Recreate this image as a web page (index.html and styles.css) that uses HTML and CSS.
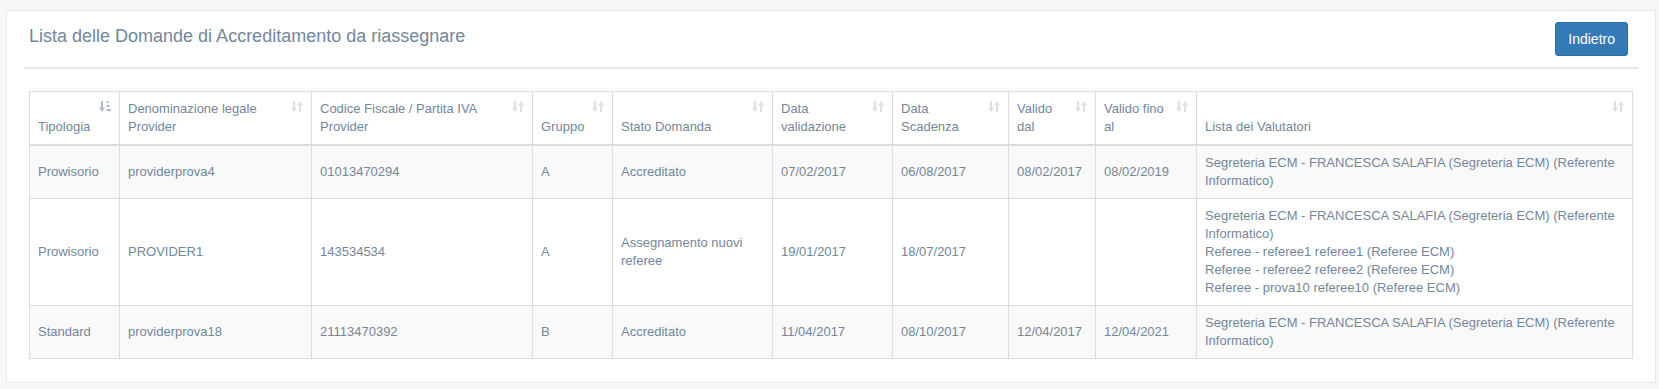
FILE: index.html
```html
<!DOCTYPE html>
<html lang="it">
<head>
<meta charset="utf-8">
<title>Lista delle Domande di Accreditamento da riassegnare</title>
<link rel="stylesheet" href="styles.css">
</head>
<body>
<div class="page">
  <div class="x-panel">
    <div class="x-title">
      <h2>Lista delle Domande di Accreditamento da riassegnare</h2>
      <button class="btn btn-primary" type="button">Indietro</button>
    </div>
    <div class="x-content">
      <table class="data-table">
        <thead>
          <tr>
            <th class="w-tip">Tipologia<svg class="sort sort-active" viewBox="0 0 12 13" width="12" height="13"><rect x="2" y="1" width="2" height="7"/><polygon points="0,7.5 6,7.5 3,12"/><rect x="7.5" y="1" width="2" height="2"/><rect x="7.5" y="5" width="3" height="2"/><rect x="7.5" y="9" width="4.5" height="2"/></svg></th>
            <th class="w-den">Denominazione legale Provider<svg class="sort" viewBox="0 0 12 13" width="12" height="13"><rect x="2" y="1" width="2" height="7"/><polygon points="0,7.5 6,7.5 3,12"/><rect x="8" y="5" width="2" height="7"/><polygon points="6,5.5 12,5.5 9,1"/></svg></th>
            <th class="w-cod">Codice Fiscale / Partita IVA Provider<svg class="sort" viewBox="0 0 12 13" width="12" height="13"><rect x="2" y="1" width="2" height="7"/><polygon points="0,7.5 6,7.5 3,12"/><rect x="8" y="5" width="2" height="7"/><polygon points="6,5.5 12,5.5 9,1"/></svg></th>
            <th class="w-gru">Gruppo<svg class="sort" viewBox="0 0 12 13" width="12" height="13"><rect x="2" y="1" width="2" height="7"/><polygon points="0,7.5 6,7.5 3,12"/><rect x="8" y="5" width="2" height="7"/><polygon points="6,5.5 12,5.5 9,1"/></svg></th>
            <th class="w-sta">Stato Domanda<svg class="sort" viewBox="0 0 12 13" width="12" height="13"><rect x="2" y="1" width="2" height="7"/><polygon points="0,7.5 6,7.5 3,12"/><rect x="8" y="5" width="2" height="7"/><polygon points="6,5.5 12,5.5 9,1"/></svg></th>
            <th class="w-dv">Data validazione<svg class="sort" viewBox="0 0 12 13" width="12" height="13"><rect x="2" y="1" width="2" height="7"/><polygon points="0,7.5 6,7.5 3,12"/><rect x="8" y="5" width="2" height="7"/><polygon points="6,5.5 12,5.5 9,1"/></svg></th>
            <th class="w-ds">Data Scadenza<svg class="sort" viewBox="0 0 12 13" width="12" height="13"><rect x="2" y="1" width="2" height="7"/><polygon points="0,7.5 6,7.5 3,12"/><rect x="8" y="5" width="2" height="7"/><polygon points="6,5.5 12,5.5 9,1"/></svg></th>
            <th class="w-vd">Valido dal<svg class="sort" viewBox="0 0 12 13" width="12" height="13"><rect x="2" y="1" width="2" height="7"/><polygon points="0,7.5 6,7.5 3,12"/><rect x="8" y="5" width="2" height="7"/><polygon points="6,5.5 12,5.5 9,1"/></svg></th>
            <th class="w-vf">Valido fino al<svg class="sort" viewBox="0 0 12 13" width="12" height="13"><rect x="2" y="1" width="2" height="7"/><polygon points="0,7.5 6,7.5 3,12"/><rect x="8" y="5" width="2" height="7"/><polygon points="6,5.5 12,5.5 9,1"/></svg></th>
            <th>Lista dei Valutatori<svg class="sort" viewBox="0 0 12 13" width="12" height="13"><rect x="2" y="1" width="2" height="7"/><polygon points="0,7.5 6,7.5 3,12"/><rect x="8" y="5" width="2" height="7"/><polygon points="6,5.5 12,5.5 9,1"/></svg></th>
          </tr>
        </thead>
        <tbody>
          <tr class="odd">
            <td>Prowisorio</td>
            <td>providerprova4</td>
            <td>01013470294</td>
            <td>A</td>
            <td>Accreditato</td>
            <td>07/02/2017</td>
            <td>06/08/2017</td>
            <td>08/02/2017</td>
            <td>08/02/2019</td>
            <td>Segreteria ECM - FRANCESCA SALAFIA (Segreteria ECM) (Referente Informatico)</td>
          </tr>
          <tr class="even">
            <td>Prowisorio</td>
            <td>PROVIDER1</td>
            <td>143534534</td>
            <td>A</td>
            <td>Assegnamento nuovi referee</td>
            <td>19/01/2017</td>
            <td>18/07/2017</td>
            <td></td>
            <td></td>
            <td>Segreteria ECM - FRANCESCA SALAFIA (Segreteria ECM) (Referente Informatico)<br>Referee - referee1 referee1 (Referee ECM)<br>Referee - referee2 referee2 (Referee ECM)<br>Referee - prova10 referee10 (Referee ECM)</td>
          </tr>
          <tr class="odd">
            <td>Standard</td>
            <td>providerprova18</td>
            <td>21113470392</td>
            <td>B</td>
            <td>Accreditato</td>
            <td>11/04/2017</td>
            <td>08/10/2017</td>
            <td>12/04/2017</td>
            <td>12/04/2021</td>
            <td>Segreteria ECM - FRANCESCA SALAFIA (Segreteria ECM) (Referente Informatico)</td>
          </tr>
        </tbody>
      </table>
    </div>
  </div>
</div>
</body>
</html>
```

FILE: styles.css
```css
* {
  box-sizing: border-box;
}

html, body {
  margin: 0;
  padding: 0;
}

body {
  background: #f7f7f7;
  font-family: "Liberation Sans", Arial, Helvetica, sans-serif;
  font-size: 13px;
  line-height: 1.471;
  color: #73879c;
}

.page {
  padding: 10px 3px 0 6px;
}

.x-panel {
  background: #fff;
  border: 1px solid #e6e9ed;
  padding: 10px 17px;
}

.x-title {
  display: flex;
  justify-content: space-between;
  align-items: flex-start;
  padding: 1px 5px 6px;
  border-bottom: 2px solid #e6e9ed;
}

.x-title h2 {
  margin: 5px 0 6px;
  font-size: 18px;
  font-weight: 400;
  line-height: 1.1;
  color: #73879c;
  white-space: nowrap;
}

.btn {
  display: inline-block;
  margin: 0 5px 5px 0;
  padding: 6px 12px;
  font-family: inherit;
  font-size: 14px;
  line-height: 20px;
  border-radius: 3px;
  border: 1px solid transparent;
  cursor: pointer;
}

.btn-primary {
  color: #fff;
  background: #337ab7;
  border-color: #2e6da4;
}

.x-content {
  padding: 22px 5px 6px;
}

.data-table {
  width: 100%;
  table-layout: fixed;
  border-collapse: collapse;
  border-spacing: 0;
  margin: 0 0 7px;
  border: 1px solid #ddd;
}

.data-table th,
.data-table td {
  border: 1px solid #ddd;
  padding: 8px;
  line-height: 18px;
  text-align: left;
}

.data-table th {
  position: relative;
  font-weight: 400;
  vertical-align: bottom;
  padding-right: 30px;
  border-bottom-width: 2px;
}

.data-table td {
  vertical-align: middle;
}

.data-table tr.odd td {
  background: #f9f9f9;
}

.sort {
  position: absolute;
  top: 8px;
  right: 8px;
  display: block;
  fill: #73879c;
  opacity: 0.25;
}

.sort-active {
  opacity: 0.55;
}

.w-tip { width: 90px; }
.w-den { width: 192px; }
.w-cod { width: 221px; }
.w-gru { width: 80px; }
.w-sta { width: 160px; }
.w-dv { width: 120px; }
.w-ds { width: 116px; }
.w-vd { width: 87px; }
.w-vf { width: 101px; }
```
